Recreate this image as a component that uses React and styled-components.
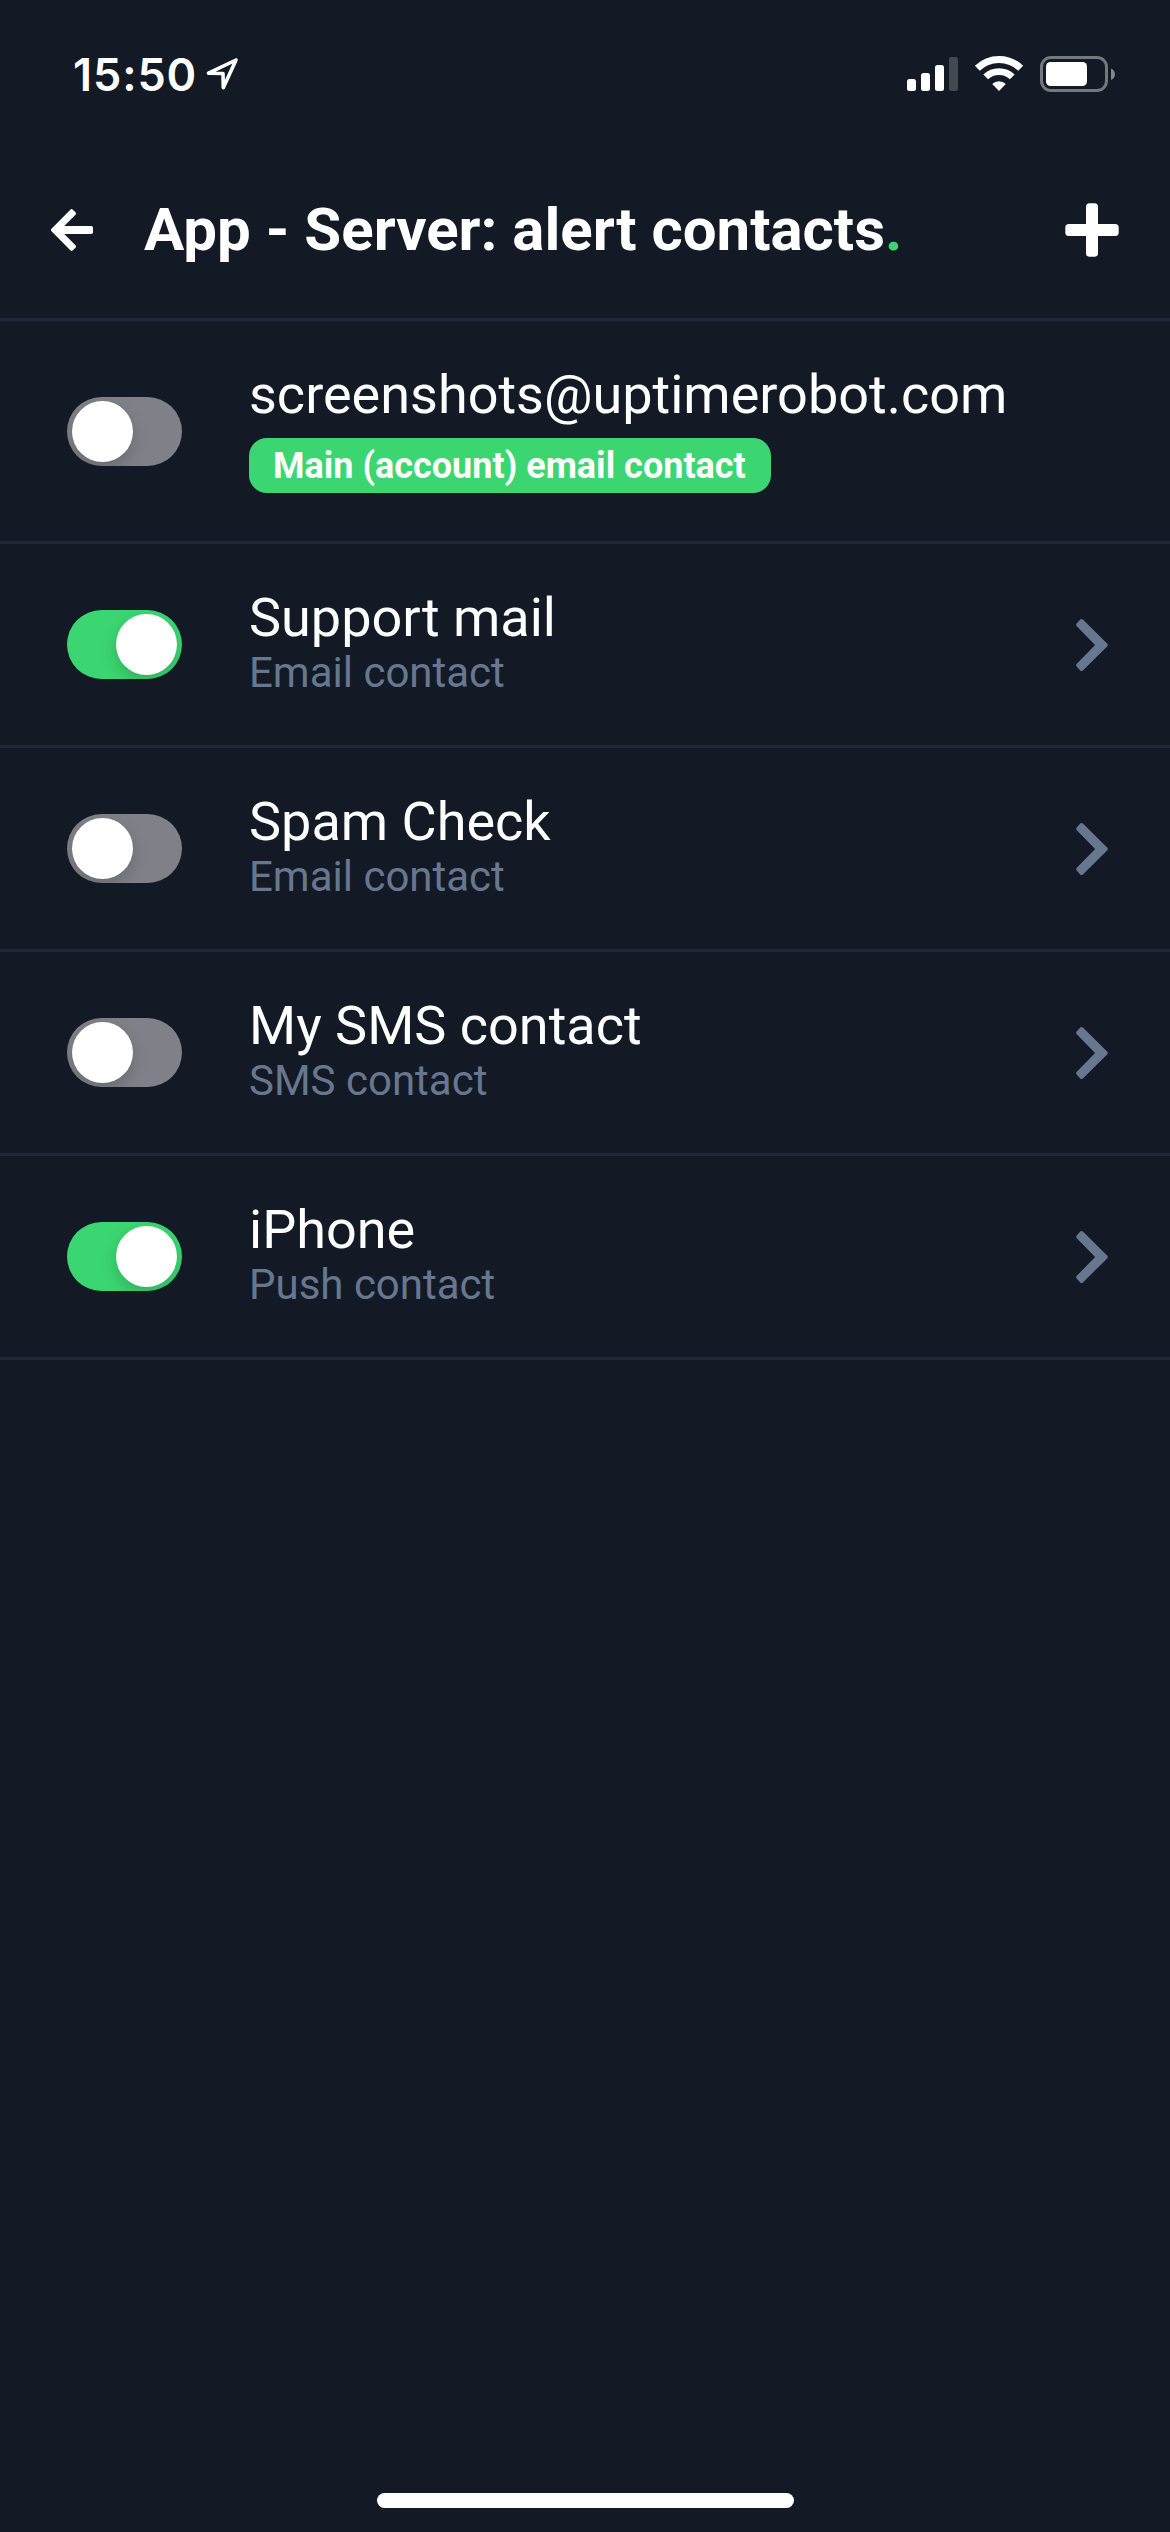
import React from 'react'
import styled, { createGlobalStyle } from 'styled-components'

const contacts = [
   { name: 'screenshots@uptimerobot.com', badge: 'Main (account) email contact', on: false },
   { name: 'Support mail', type: 'Email contact', on: true },
   { name: 'Spam Check', type: 'Email contact', on: false },
   { name: 'My SMS contact', type: 'SMS contact', on: false },
   { name: 'iPhone', type: 'Push contact', on: true },
]

function StatusIcons() {
   return (
      <svg width="210" height="40" viewBox="0 0 210 40">
         <g fill="#fff">
            <rect x="2" y="26" width="9" height="12" rx="2.5" />
            <rect x="16" y="20" width="9" height="18" rx="2.5" />
            <rect x="30" y="12" width="9" height="26" rx="2.5" />
            <rect x="44" y="4" width="9" height="34" rx="2.5" fill="#434851" />
         </g>
         <g fill="none" stroke="#fff">
            <path d="M72.3 15.2a31.2 31.2 0 0 1 43.4 0" strokeWidth="7" />
            <path d="M80.7 23.9a19.2 19.2 0 0 1 26.6 0" strokeWidth="6.8" />
         </g>
         <path d="M94 38l-6.8-7a9.8 9.8 0 0 1 13.6 0z" fill="#fff" />
         <rect x="136.5" y="4.5" width="65" height="33" rx="9.5" fill="none" stroke="#74787f" strokeWidth="3" />
         <rect x="141" y="9" width="41" height="24" rx="4.5" fill="#fff" />
         <path d="M206 15.5a6.2 6.2 0 0 1 0 11.5z" fill="#84878d" />
      </svg>
   )
}

function App() {
   return (
      <Screen>
         <GlobalStyle />
         <StatusBar>
            <Clock>
               <span>15:50</span>
               <svg width="34" height="34" viewBox="0 0 34 34">
                  <path d="M31 2L3.5 15.2l14.5.3.3 14.2z" fill="none" stroke="#fff" strokeWidth="3.6" strokeLinejoin="round" />
               </svg>
            </Clock>
            <StatusIcons />
         </StatusBar>
         <Header>
            <IconButton aria-label="Back">
               <svg width="42" height="42" viewBox="0 0 42 42">
                  <path d="M1.8 21L20.6 2l2.6 2.6L9 18.8H40.2v4.4H9l14.2 14.2-2.6 2.6z" fill="#fff" stroke="#fff" strokeWidth="3.6" strokeLinejoin="round" />
               </svg>
            </IconButton>
            <Title>App - Server: alert contacts<Dot>.</Dot></Title>
            <IconButton aria-label="Add">
               <svg width="54" height="54" viewBox="0 0 54 54" fill="#fff">
                  <rect x="21" y="0.3" width="12" height="53.4" rx="3.5" />
                  <rect x="0.3" y="21" width="53.4" height="12" rx="3.5" />
               </svg>
            </IconButton>
         </Header>
         <List>
            {contacts.map((c) => (
               <Row key={c.name} $tall={!!c.badge}>
                  <Toggle $on={c.on} role="switch" aria-checked={c.on}>
                     <Knob />
                  </Toggle>
                  <Info>
                     <Name>{c.name}</Name>
                     {c.badge ? <Badge>{c.badge}</Badge> : <Type>{c.type}</Type>}
                  </Info>
                  {!c.badge && (
                     <svg width="32" height="54" viewBox="0 0 32 54">
                        <path d="M5.5 3L29.7 27 5.500 51 2.200 47.200 22 27 2.200 6.800z" fill="#687790" stroke="#687790" strokeWidth="4" strokeLinejoin="round" />
                     </svg>
                  )}
               </Row>
            ))}
         </List>
         <HomeIndicator />
      </Screen>
   )
}

export default App

const GlobalStyle = createGlobalStyle`
  * {
     box-sizing : border-box;
  }
  body {
     margin : 0;
     background : #131a26;
  }
`

const Screen = styled.div`
  height : 2532px;
  display : flex;
  flex-direction : column;
  background : #131a26;
  color : #fff;
  font-family : Roboto, sans-serif;
`

const StatusBar = styled.div`
  height : 142px;
  padding : 4px 55px 0 73px;
  display : flex;
  align-items : center;
  justify-content : space-between;
`

const Clock = styled.div`
  padding-top : 3px;
  display : flex;
  align-items : center;
  gap : 8px;
  font-family : Inter, sans-serif;
  font-size : 45px;
  font-weight : 600;
  letter-spacing : 0.9px;
`

const Header = styled.header`
  height : 179px;
  padding : 0 51px;
  display : flex;
  align-items : center;
  border-bottom : 3px solid #1f2834;
`

const IconButton = styled.button`
  display : flex;
  padding : 0;
  border : none;
  background : none;
  cursor : pointer;
`

const Title = styled.h1`
  flex : 1;
  margin : 0 0 0 51px;
  font-size : 60px;
  font-weight : 700;
  line-height : 70px;
  white-space : nowrap;
`

const Dot = styled.span`
  color : #3bd671;
`

const List = styled.div`
  flex : 1;
`

const Row = styled.div`
  height : ${(p) => (p.$tall ? 223 : 204)}px;
  padding : 0 62px 0 67px;
  display : flex;
  align-items : center;
  border-bottom : 3px solid #1f2834;
`

const Toggle = styled.div`
  width : 115px;
  height : 69px;
  padding : 4px 5px;
  display : flex;
  justify-content : ${(p) => (p.$on ? 'flex-end' : 'flex-start')};
  border-radius : 35px;
  background : ${(p) => (p.$on ? '#3bd671' : '#808088')};
  overflow : hidden;
`

const Knob = styled.div`
  width : 61px;
  height : 61px;
  border-radius : 50%;
  background : #fff;
  box-shadow : 0 6px 16px rgba(0,0,0,0.18);
`

const Info = styled.div`
  flex : 1;
  align-self : flex-start;
  padding-top : 42px;
  margin-left : 67px;
`

const Name = styled.div`
  font-size : 54px;
  line-height : 63px;
`

const Type = styled.div`
  font-size : 42px;
  line-height : 47px;
  color : #687790;
`

const Badge = styled.div`
  width : fit-content;
  height : 55px;
  margin-top : 12px;
  padding : 0 25px 0 24px;
  border-radius : 18px;
  background : #3bd671;
  font-size : 36px;
  font-weight : 700;
  line-height : 57px;
`

const HomeIndicator = styled.div`
  width : 417px;
  height : 15px;
  margin : 0 auto 24px;
  border-radius : 8px;
  background : #fff;
`
